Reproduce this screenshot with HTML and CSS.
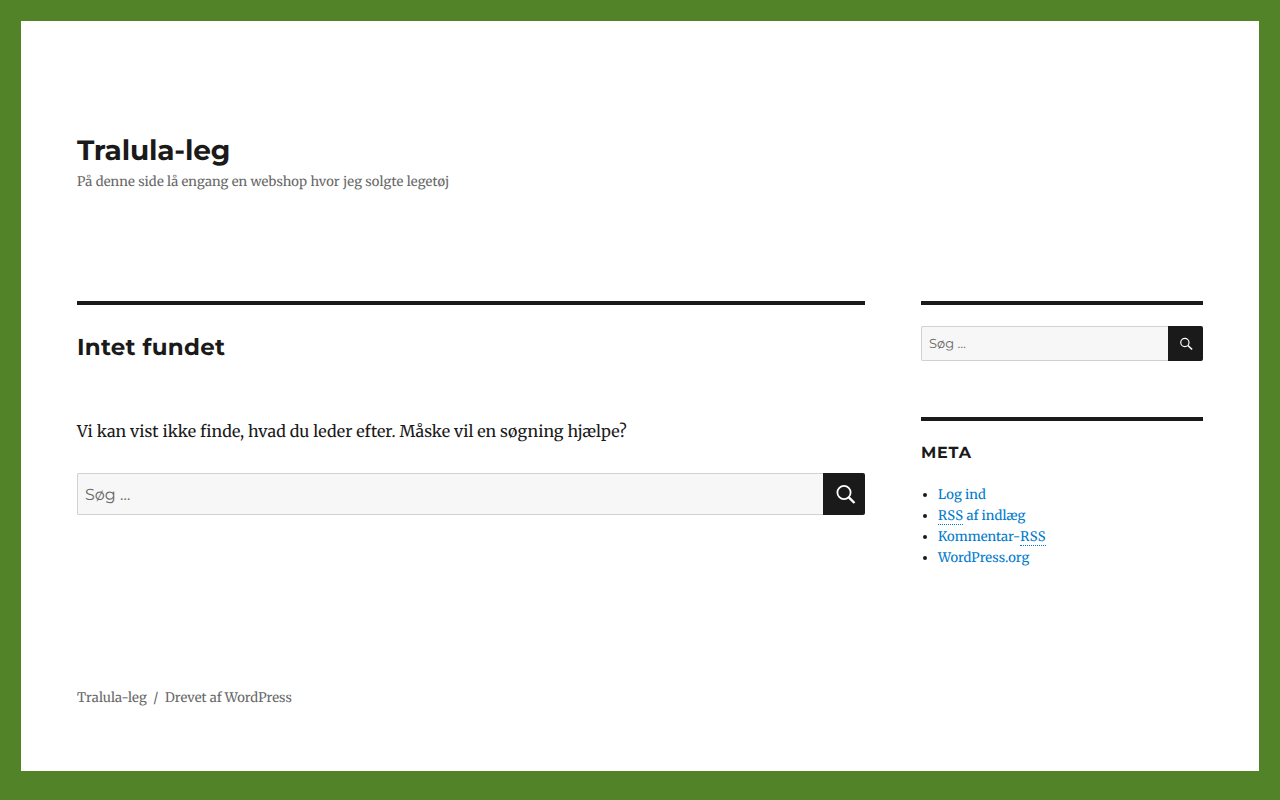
FILE: index.html
```html
<!DOCTYPE html>
<html lang="da">
<head>
<meta charset="utf-8">
<title>Tralula-leg</title>
<link rel="stylesheet" href="styles.css">
</head>
<body>
<div class="site">
  <header class="site-header">
    <p class="site-title"><a href="#">Tralula-leg</a></p>
    <p class="site-description">På denne side lå engang en webshop hvor jeg solgte legetøj</p>
  </header>
  <div class="site-content">
    <main class="content">
      <h1 class="page-title">Intet fundet</h1>
      <p class="notice">Vi kan vist ikke finde, hvad du leder efter. Måske vil en søgning hjælpe?</p>
      <form class="search search-large">
        <input class="search-field" type="search" placeholder="Søg …">
        <button class="search-submit" type="button" aria-label="Søg">
          <svg class="icon-large" viewBox="0 0 24 24"><circle cx="12" cy="10.5" r="6.6" fill="none" stroke="#fff" stroke-width="1.8"/><path d="M16.8 15.3 22.5 21" fill="none" stroke="#fff" stroke-width="2.4"/></svg>
        </button>
      </form>
    </main>
    <aside class="sidebar">
      <section class="widget widget-search">
        <form class="search search-small">
          <input class="search-field" type="search" placeholder="Søg …">
          <button class="search-submit" type="button" aria-label="Søg">
            <svg class="icon-small" viewBox="0 0 24 24"><circle cx="10.3" cy="9.75" r="6.2" fill="none" stroke="#fff" stroke-width="1.8"/><path d="M14.8 14.2 21.2 20.3" fill="none" stroke="#fff" stroke-width="2.4"/></svg>
          </button>
        </form>
      </section>
      <section class="widget">
        <h2 class="widget-title">META</h2>
        <ul class="meta-list">
          <li><a href="#">Log ind</a></li>
          <li><a href="#"><abbr title="Really Simple Syndication">RSS</abbr> af indlæg</a></li>
          <li><a href="#">Kommentar-<abbr title="Really Simple Syndication">RSS</abbr></a></li>
          <li><a href="#">WordPress.org</a></li>
        </ul>
      </section>
    </aside>
  </div>
  <footer class="site-footer">
    <a href="#">Tralula-leg</a><span class="sep">/</span><a href="#">Drevet af WordPress</a>
  </footer>
</div>
</body>
</html>
```
FILE: styles.css
```css
* { box-sizing: border-box; }
html, body { margin: 0; height: 100%; }
body {
  background: #528329;
  padding: 21px;
  color: #1a1a1a;
  font-family: Merriweather, "DejaVu Serif", serif;
  text-rendering: geometricPrecision;
}
a { color: inherit; text-decoration: none; }
.site {
  background: #fff;
  height: 750px;
  padding: 0 56px;
  display: flex;
  flex-direction: column;
}
.site-header { padding-top: 113px; height: 280px; }
.site-title {
  margin: 0;
  font: 700 28px/35px Montserrat, Inter, sans-serif;
  letter-spacing: -0.18px;
}
.site-description {
  margin: 2px 0 0;
  font: 13px/21px Merriweather, "DejaVu Serif", serif;
  letter-spacing: 0.12px;
  color: #686868;
}
.site-content {
  display: grid;
  grid-template-columns: 788px 282px;
  column-gap: 56px;
  flex: 1;
}
.content { border-top: 4px solid #1a1a1a; }
.page-title {
  margin: 0;
  padding-top: 26px;
  font: 700 23px/32px Montserrat, Inter, sans-serif;
  letter-spacing: 0.25px;
}
.notice {
  margin: 0;
  padding-top: 55px;
  font: 16px/28px Merriweather, "DejaVu Serif", serif;
  letter-spacing: 0.055px;
}
.search { display: flex; }
.search-large { margin-top: 27px; height: 42px; }
.search-small { height: 35px; }
.search-field {
  flex: 1;
  min-width: 0;
  background: #f7f7f7;
  border: 1px solid #d1d1d1;
  border-right: 0;
  border-radius: 2px 0 0 2px;
  padding: 0 7px;
  color: #686868;
  font-family: Montserrat, Inter, sans-serif;
  text-rendering: geometricPrecision;
  outline: 0;
  appearance: none;
}
.search-field::placeholder { color: #686868; opacity: 1; }
.search-large .search-field { font-size: 16px; padding-top: 2px; }
.search-small .search-field { font-size: 13px; }
.search-submit {
  background: #1a1a1a;
  border: 0;
  border-radius: 0 2px 2px 0;
  padding: 0;
  display: flex;
  align-items: center;
  justify-content: center;
}
.search-large .search-submit { width: 42px; }
.search-small .search-submit { width: 35px; }
.icon-large { width: 24px; height: 24px; }
.icon-small { width: 16px; height: 16px; }
.widget { border-top: 4px solid #1a1a1a; }
.widget-search { padding-top: 21px; height: 116px; }
.widget-title {
  margin: 0;
  padding-top: 23px;
  font: 700 16px/20px Montserrat, Inter, sans-serif;
  letter-spacing: 0.8px;
}
.meta-list {
  margin: 20px 0 0;
  padding: 0 0 0 17px;
  font: 13px/21px Merriweather, "DejaVu Serif", serif;
  letter-spacing: 0.05px;
}
.meta-list a { color: #007acc; }
.meta-list abbr { text-decoration: none; border-bottom: 1px dotted #007acc; letter-spacing: 0.35px; }
.site-footer {
  height: 85px;
  padding-top: 1px;
  font: 13px/21px Merriweather, "DejaVu Serif", serif;
  letter-spacing: 0.05px;
  color: #686868;
}
.sep { margin: 0 6.5px; }
```
